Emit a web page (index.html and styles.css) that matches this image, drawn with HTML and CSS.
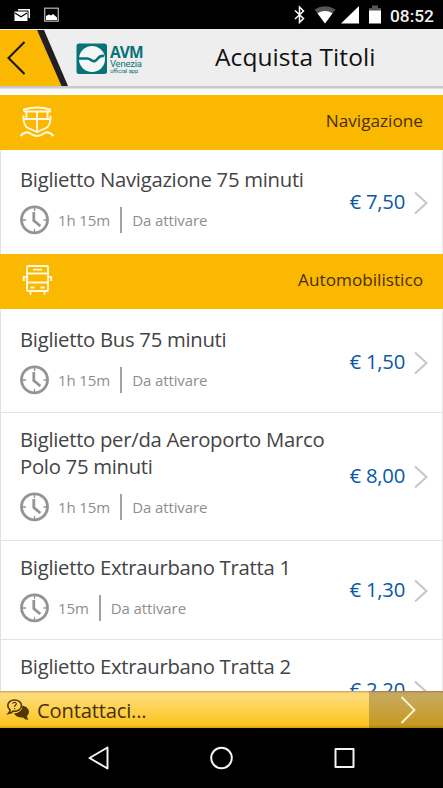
FILE: index.html
```html
<!DOCTYPE html>
<html lang="it">
<head>
<meta charset="utf-8">
<title>Acquista Titoli</title>
<link rel="stylesheet" href="styles.css">
</head>
<body>
<svg width="0" height="0" class="defs">
  <symbol id="clock" viewBox="0 0 30 30"><g fill="none" stroke="#949494"><circle cx="14.500" cy="14.800" r="13" stroke-width="2.800"/><path d="M14.500 2v4M14.500 24v4M2 15h4M23.500 15h4" stroke-width="1.300"/><path d="M13.800 7v8.500l6.500 5.500" stroke-width="2.800"/></g></symbol>
  <symbol id="chev" viewBox="0 0 14 24"><path d="M1 1.500L12.500 12L1 22.500" fill="none" stroke="#c8c8c8" stroke-width="2.200"/></symbol>
</svg>
<div class="phone">
  <div class="status">
    <svg class="status-left" width="70" height="29" viewBox="0 0 70 29">
      <path d="M18 9H30V18H28.500V10.500H18Z" fill="#fff"/>
      <rect x="14.500" y="11.500" width="13" height="9.500" fill="#fff"/><path d="M15 13l6 3.700 6-3.700" fill="none" stroke="#000" stroke-width="1.200"/>
      <rect x="44.700" y="8.200" width="13.600" height="13" fill="none" stroke="#aaa" stroke-width="1.300"/><path d="M46 20v-4l3-1.500 2 1 2-1.500 4 3.500V20z" fill="#fff"/>
    </svg>
    <svg class="status-right" width="96" height="29" viewBox="290 0 96 29">
      <path d="M295 10.500l8.500 8-4 4V7l4 4-8.500 8" fill="none" stroke="#fff" stroke-width="1.500"/>
      <path d="M314.500 9.500Q325 3 335.500 9.500L325 23.500Z" fill="#555"/><path d="M317.500 13.200Q325 9 332.500 13.200L325 23.500Z" fill="#fff"/>
      <path d="M341 23.500h18V6z" fill="#fff"/>
      <path d="M369 8h3V5.500h6V8h3v4h-12z" fill="#555"/><path d="M369 10.500h12v13h-12z" fill="#fff"/>
    </svg>
    <span class="time">08:52</span>
  </div>
  <header class="header">
    <svg class="back" width="70" height="57" viewBox="0 0 70 57"><path d="M0 1H37L62 57H0Z" fill="#fab900"/><path d="M37 1h7l24 56h-6.500z" fill="#231f20"/><path d="M24.500 13L8.500 29l16 16" fill="none" stroke="#16110a" stroke-width="2"/></svg>
    <div class="logo">
      <svg width="32" height="32" viewBox="0 0 32 32"><rect x=".5" y=".5" width="30.500" height="30.500" rx="2.500" fill="#087377"/><circle cx="16" cy="16" r="13" fill="#f4f6f6"/><path d="M2 15.500H11C15 15.500 16 19 19 18C22 17 22 12 28 13" fill="none" stroke="#087377" stroke-width="2.600"/></svg>
      <div class="logo-text"><b>AVM</b><span class="city">Venezia</span><span class="tag">official app</span></div>
    </div>
    <h1>Acquista Titoli</h1>
  </header>
  <main class="list">
    <div class="section">
      <svg width="36" height="34" viewBox="0 0 36 34"><g fill="none" stroke="#fff7df" stroke-width="1.900"><path d="M4 6.500V4.500Q17 .5 30 4.500V6.500H4M6.500 7V13M27.500 7V13M17 7V27M3.500 10.500V14H30.500V10.500M3.500 14Q4 20 7 22.500L17 27L27 22.500Q30 20 30.500 14"/><path d="M.5 31Q6 25 11 29Q17 33 23 29Q28 25 33.500 31" stroke-width="2"/></g></svg>
      <span>Navigazione</span>
    </div>
    <div class="row r1">
      <div class="info"><div class="title"><span>Biglietto Navigazione 75 minuti</span></div><div class="meta"><svg><use href="#clock"/></svg><span class="dur">1h 15m</span><span class="state">Da attivare</span></div></div>
      <span class="price">€ 7,50</span><svg class="chev"><use href="#chev"/></svg>
    </div>
    <div class="section">
      <svg width="36" height="34" viewBox="0 0 36 34"><g fill="none" stroke="#fff7df" stroke-width="1.900"><rect x="7" y="2" width="21" height="25" rx="1"/><path d="M7 9.500H28M7 18.500H28M3.800 17V13H7M31.200 17V13H28M10.500 27v3.800M24.500 27v3.800"/><path d="M13 5.700h9M10.500 23.500h4M20.500 23.500h4" stroke-width="1.800"/></g></svg>
      <span>Automobilistico</span>
    </div>
    <div class="row r2">
      <div class="info"><div class="title"><span>Biglietto Bus 75 minuti</span></div><div class="meta"><svg><use href="#clock"/></svg><span class="dur">1h 15m</span><span class="state">Da attivare</span></div></div>
      <span class="price">€ 1,50</span><svg class="chev"><use href="#chev"/></svg>
    </div>
    <div class="row r3">
      <div class="info"><div class="title"><span>Biglietto per/da Aeroporto Marco<br>Polo 75 minuti</span></div><div class="meta"><svg><use href="#clock"/></svg><span class="dur">1h 15m</span><span class="state">Da attivare</span></div></div>
      <span class="price">€ 8,00</span><svg class="chev"><use href="#chev"/></svg>
    </div>
    <div class="row r4">
      <div class="info"><div class="title"><span>Biglietto Extraurbano Tratta 1</span></div><div class="meta"><svg><use href="#clock"/></svg><span class="dur">15m</span><span class="state">Da attivare</span></div></div>
      <span class="price">€ 1,30</span><svg class="chev"><use href="#chev"/></svg>
    </div>
    <div class="row r5">
      <div class="info"><div class="title"><span>Biglietto Extraurbano Tratta 2</span></div></div>
      <span class="price">€ 2,20</span><svg class="chev"><use href="#chev"/></svg>
    </div>
  </main>
  <footer class="contact">
    <svg width="24" height="24" viewBox="0 0 24 24"><path d="M16.500 7.500C20 8.500 23 10.500 23 14Q23 16.500 21 18Q21 20 22.500 22Q18.500 21.500 17 19.500Q10.500 20 8 15.500Q16 15 16.500 7.500Z" fill="#523700"/><path d="M8.500 2C4.500 2 1.800 4.300 1.800 7.500Q1.800 10 4 11.800Q4 14 2.500 15.500Q5.500 15 7 13.200C12 13.700 15.500 11 15.500 7.500C15.500 4.300 12.500 2 8.500 2Z" fill="none" stroke="#523700" stroke-width="1.600"/><path d="M6.800 6Q7 4.300 8.700 4.300Q10.500 4.500 10.300 6Q10 7 8.700 7.900V9M8.700 10v1.300" fill="none" stroke="#523700" stroke-width="1.100"/></svg>
    <span class="contact-text">Contattaci...</span>
    <div class="go"><svg width="16" height="28" viewBox="0 0 16 28"><path d="M1.500 1L14.500 14L1.500 27" fill="none" stroke="#fff6dc" stroke-width="1.800"/></svg></div>
  </footer>
  <nav class="nav">
    <svg width="443" height="60" viewBox="0 728 443 60"><g fill="none" stroke="#f4f4f4" stroke-width="2" stroke-linejoin="round"><path d="M107.500 747.500V768.500L89.500 758Z"/><circle cx="221.500" cy="758" r="10.300"/><rect x="335.500" y="749" width="18" height="18"/></g></svg>
  </nav>
</div>
</body>
</html>
```
FILE: styles.css
```css
* { box-sizing: border-box; }
body { margin: 0; font-family: "Open Sans", sans-serif; background: #000; }
.defs { position: absolute; }
svg { display: block; flex: none; }
.phone { width: 443px; height: 788px; display: flex; flex-direction: column; overflow: hidden; }
.status { height: 29px; flex: none; background: #000; display: flex; align-items: center; }
.status-right { margin-left: 220px; }
.time { margin-left: 4px; padding-top: 2px; font: 500 17.3px/20px Roboto, sans-serif; color: #f0f0f0; white-space: nowrap; }
.header { height: 57px; flex: none; background: #eee; display: flex; align-items: center; }
.logo { display: flex; margin: 3px 0 0 6px; width: 68px; }
.logo-text { display: flex; flex-direction: column; color: #087377; padding: 2px 0 0 2px; white-space: nowrap; }
.logo-text b { font: 700 15.5px/14px "Open Sans", sans-serif; letter-spacing: -.9px; }
.city { font: 9.5px/9px Roboto, sans-serif; letter-spacing: -.25px; }
.tag { font: 5.8px/7px Roboto, sans-serif; }
h1 { margin: -1px 0 0 71px; font-size: 24.5px; line-height: 32px; font-weight: 400; color: #111; white-space: nowrap; letter-spacing: .08px; }
.list { flex: 1; min-height: 0; overflow: hidden; background: #fff; padding-top: 9px; background-image: linear-gradient(#c5c5cf 0, #c8cec8 2px, #f5f5f6 3px, #fff 9px, #fff 100%); }
.section { height: 55px; margin-bottom: 1px; background: #fab900; display: flex; align-items: center; justify-content: space-between; padding: 0 20px 2px; color: #4a2d0a; font-size: 17.2px; }
.section span { position: relative; top: -1px; }
.row { display: flex; border-left: 1px solid #e0e0e6; border-right: 1px solid #e8e8ec; padding: 13px 14px 0 19px; align-items: flex-start; border-bottom: 1px solid #e4e4e4; }
.info { flex: 1; }
.title { color: #444; font-size: 20.3px; line-height: 27px; white-space: nowrap; letter-spacing: -.28px; }
.meta { display: flex; align-items: center; height: 30px; margin-top: 12px; font-size: 15px; letter-spacing: -.1px; color: #8e8e8e; }
.meta svg { width: 30px; height: 30px; }
.dur { margin-left: 8px; }
.state { border-left: 2px solid #a2a2a2; margin-left: 10px; padding-left: 10px; line-height: 26px; }
.dur, .state { margin-top: -1px; }
.price { color: #0858a8; font-size: 20.3px; letter-spacing: -.25px; line-height: 27px; white-space: nowrap; margin-right: 9px; }
.chev { width: 14px; height: 24px; margin-top: 3px; }
.r1 { height: 103px; padding-top: 15px; border-bottom: 0; }
.r2 { height: 103px; padding-top: 16px; }
.r1 .price, .r2 .price { margin-top: 22px; }
.r1 .chev, .r2 .chev { margin-top: 25px; }
.r3 { height: 128px; }
.r3 .price { margin-top: 36px; }
.r3 .chev { margin-top: 39px; }
.r4 { height: 99px; }
.r4 .price { margin-top: 22px; }
.r4 .chev { margin-top: 25px; }
.r5 { height: 100px; }
.r5 .price { margin-top: 23px; }
.r5 .chev { margin-top: 27px; }
.contact { height: 37px; flex: none; display: flex; align-items: center; padding-left: 6px; background: linear-gradient(#c49a4c 0, #fbd77a 2px, #fedb78 5px, #fdc51f 34px, #e09b10 37px); color: #48300a; font-size: 20.2px; letter-spacing: -.2px; }
.contact-text { margin-left: 7px; }
.go { margin-left: auto; width: 74px; height: 37px; display: flex; align-items: center; padding-left: 31px; background: rgba(72, 56, 32, .3); }
.nav { height: 60px; flex: none; background: #000; }
```
